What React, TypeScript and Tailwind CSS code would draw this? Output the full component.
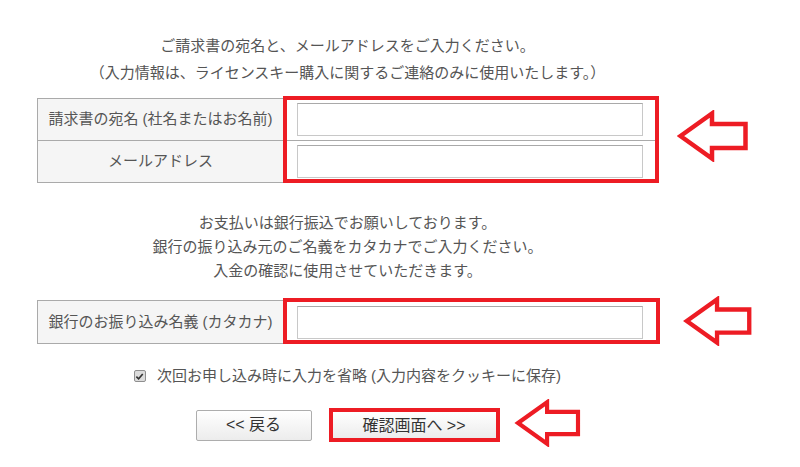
import React from 'react'

const font = { fontFamily: '"Liberation Sans", "Noto Sans CJK JP", sans-serif' }

function Arrow({ className }: { className: string }) {
  return (
    <svg className={className} viewBox="0 0 72 52" fill="white">
      <path
        d="M3.5 26 L35 3.5 L35 14 L68.5 14 L68.5 38 L35 38 L35 48.5 Z"
        stroke="#ed1c24"
        strokeWidth="4.5"
        strokeLinejoin="miter"
      />
    </svg>
  )
}

function TextInput() {
  return (
    <input
      type="text"
      className="block w-full h-[33px] border border-[#c8c8c8] border-t-[#a9a9a9] bg-white outline-none"
    />
  )
}

function Label({ children }: { children: React.ReactNode }) {
  return (
    <div className="w-[246px] shrink-0 flex items-center justify-center bg-[#f5f5f5] border-r border-[#aaaaaa] text-[15px] text-[#555]">
      {children}
    </div>
  )
}

export default function App() {
  return (
    <div style={font} className="relative w-[800px] h-[467px] bg-white overflow-hidden">
      <div className="ml-[37px] w-[621px] pt-[32px]">
        {/* intro */}
        <p className="text-center text-[15px] leading-[27px] text-[#555]">
          ご請求書の宛名と、メールアドレスをご入力ください。
          <br />
          （入力情報は、ライセンスキー購入に関するご連絡のみに使用いたします。）
        </p>

        {/* name & email */}
        <div className="relative mt-[12px]">
          <div className="border border-[#aaaaaa]">
            <div className="flex h-[42px] border-b border-[#aaaaaa]">
              <Label>請求書の宛名 (社名またはお名前)</Label>
              <div className="flex-1 flex items-center pl-[13px] pr-[14px]">
                <TextInput />
              </div>
            </div>
            <div className="flex h-[41px]">
              <Label>メールアドレス</Label>
              <div className="flex-1 flex items-center pl-[13px] pr-[14px]">
                <TextInput />
              </div>
            </div>
          </div>
          <div className="absolute left-[246px] top-[-2px] w-[376px] h-[87px] border-4 border-[#ed1c24] pointer-events-none" />
          <Arrow className="absolute left-[640px] top-[12px] w-[72px] h-[52px]" />
        </div>

        {/* bank notice */}
        <p className="mt-[28px] text-center text-[15px] leading-[24px] text-[#555]">
          お支払いは銀行振込でお願いしております。
          <br />
          銀行の振り込み元のご名義をカタカナでご入力ください。
          <br />
          入金の確認に使用させていただきます。
        </p>

        {/* bank name */}
        <div className="relative mt-[17px]">
          <div className="border border-[#aaaaaa]">
            <div className="flex h-[42px]">
              <Label>銀行のお振り込み名義 (カタカナ)</Label>
              <div className="flex-1 flex items-center pl-[13px] pr-[14px]">
                <TextInput />
              </div>
            </div>
          </div>
          <div className="absolute left-[246px] top-[-2px] w-[377px] h-[46px] border-4 border-[#ed1c24] pointer-events-none" />
          <Arrow className="absolute left-[645px] top-[-4px] w-[72px] h-[50px]" />
        </div>

        {/* remember */}
        <label className="mt-[20px] flex items-center justify-center gap-[11px] text-[15px] leading-[24px] text-[#555]">
          <span className="w-[12px] h-[12px] border border-[#8f8f8f] bg-[#dcdcdc] rounded-[2px] flex items-center justify-center">
            <svg viewBox="0 0 10 10" className="w-[9px] h-[9px]">
              <path d="M1.5 5.2 L4 7.6 L8.6 2.2" fill="none" stroke="#333" strokeWidth="1.8" />
            </svg>
          </span>
          次回お申し込み時に入力を省略 (入力内容をクッキーに保存)
        </label>

        {/* buttons */}
        <div className="mt-[20px] flex justify-center items-center gap-[17px]">
          <button className="w-[116px] h-[31px] border border-[#adadad] rounded-[2px] bg-gradient-to-b from-white to-[#ececec] text-[16px] text-[#333]">
            &lt;&lt; 戻る
          </button>
          <div className="relative">
            <button className="block w-[171px] h-[34px] px-[4px] py-[2px] border-4 border-[#ed1c24] bg-gradient-to-b from-white to-[#ececec] text-[16px] text-[#333]">
              確認画面へ &gt;&gt;
            </button>
            <Arrow className="absolute left-[184px] top-[-9px] w-[70px] h-[48px]" />
          </div>
        </div>
      </div>
    </div>
  )
}
